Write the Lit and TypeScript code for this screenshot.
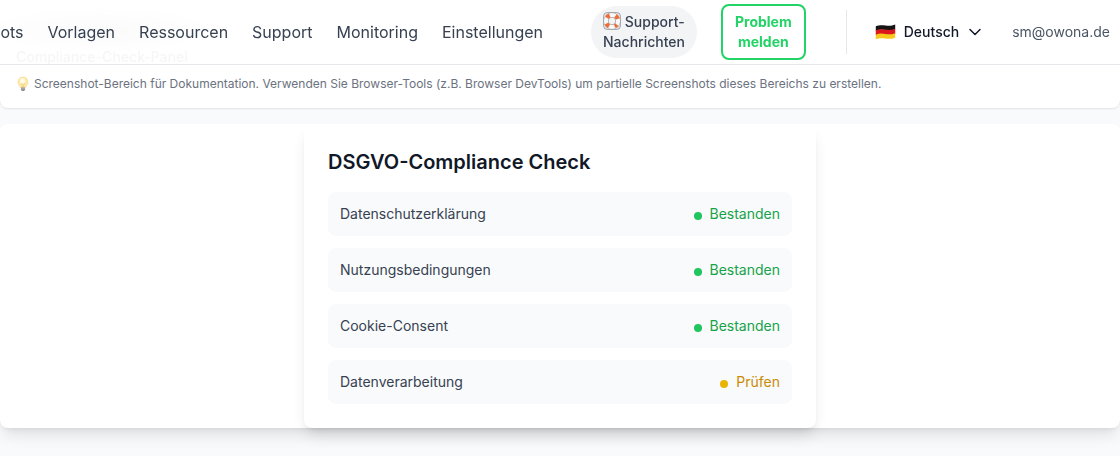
import { LitElement, html, css, svg } from "lit";
import { customElement } from "lit/decorators.js";
import { classMap } from "lit/directives/class-map.js";

const lifebuoy = svg`
  <rect x="0.6" y="0.6" width="16.8" height="16.8" rx="3.5" fill="#e6e8ea" stroke="#989ca2" stroke-width="0.9"/>
  <circle cx="9" cy="9" r="6" fill="none" stroke="#9a9ea4" stroke-width="5"/>
  <circle cx="9" cy="9" r="6" fill="none" stroke="#f8f8f8" stroke-width="4.2"/>
  <circle cx="9" cy="9" r="6" fill="none" stroke="#ee6c38" stroke-width="4.4"
    stroke-dasharray="3.8 5.625" stroke-dashoffset="1.9" transform="rotate(45 9 9)"/>
  <circle cx="9" cy="9" r="3.7" fill="#f3f4f6" stroke="#a09490" stroke-width="0.6"/>`;

const bulb = svg`
  <path d="M6 0.6C3 0.6 1 2.8 1 5.5c0 2.4 1.7 3.3 2.3 5.5h5.4c.6-2.2 2.3-3.1 2.3-5.5C11 2.8 9 .6 6 .6z"
    fill="#fdeaa8" stroke="#f2d68a" stroke-width="0.6"/>
  <ellipse cx="5.6" cy="4.6" rx="2.6" ry="2.8" fill="#fffbe6"/>
  <path d="M4.8 6.5l.6 4.2M7.2 6.5l-.6 4.2" stroke="#e3b95c" stroke-width="0.5"/>
  <path d="M3.9 11h4.2v2.2L7 14.6H5l-1.1-1.4z" fill="#8f8f8d"/>
  <path d="M3.9 12.2h4.2" stroke="#d2d2d0" stroke-width="0.5"/>`;

const flag = svg`
  <path d="M.6 2.2C4 .8 7 1 10 1.5s6 .5 9.4-.9V5C16 6.500 13 6.400 10 6S4 5.300.6 6.700z" fill="#151515"/>
  <path d="M.6 6C4 4.600 7 4.900 10 5.400s6 .5 9.400-.8v5C16 11 13 10.900 10 10.400S4 9.700.6 11z" fill="#d9171c"/>
  <path d="M.6 10.300C4 8.900 7 9.200 10 9.700s6 .5 9.400-.8v4.300c-3.400 1.400-6.400 1.300-9.400.9S4 13.400.6 14.800z" fill="#f8c81c"/>`;

@customElement("app-header")
class AppHeader extends LitElement {
  static styles = css`
    :host {
      position: fixed;
      inset: 0 0 auto 0;
      z-index: 10;
      display: flex;
      align-items: center;
      height: 64px;
      padding-right: 10px;
      background: radial-gradient(ellipse 120px 24px at 100px 30px, rgb(0 0 0 / 0.02), transparent),
        rgb(255 255 255 / 0.96);
      border-bottom: 1px solid #e5e7eb;
      white-space: nowrap;
    }
    nav {
      flex: 1;
      min-width: 0;
      overflow: hidden;
      display: flex;
      justify-content: flex-end;
      gap: 24px;
      margin-right: 48px;
      font-size: 16px;
      line-height: 24px;
    }
    a {
      flex: none;
      color: #374151;
      text-decoration: none;
    }
    button {
      font: inherit;
      cursor: pointer;
    }
    .messages {
      border-radius: 26px;
      padding: 6px 12px;
      background: #f3f4f6;
      font-size: 14px;
      line-height: 20px;
      font-weight: 500;
    }
    .messages svg {
      width: 18px;
      height: 18px;
      vertical-align: -3px;
    }
    .report {
      margin-left: 24px;
      padding: 6px 12px;
      border: 2px solid #22d366;
      border-radius: 8px;
      background: #fff;
      color: #22d366;
      font-size: 14px;
      line-height: 20px;
      font-weight: 700;
    }
    .divider {
      margin-left: 40px;
      width: 1px;
      height: 44px;
      background: #e5e7eb;
    }
    .language {
      display: flex;
      align-items: center;
      margin-left: 28px;
      padding: 0;
      border: 0;
      background: none;
      color: #111827;
      font-size: 14px;
      line-height: 20px;
      font-weight: 500;
      gap: 8px;
    }
    .mail {
      margin-left: 29px;
      color: #4b5563;
      font-size: 14px;
      line-height: 20px;
    }
  `;

  private links = ["Screenshots", "Vorlagen", "Ressourcen", "Support", "Monitoring", "Einstellungen"];

  render() {
    return html`
      <nav>${this.links.map((name) => html`<a href="#">${name}</a>`)}</nav>
      <a class="messages" href="#">
        <svg viewBox="0 0 18 18" aria-hidden="true">${lifebuoy}</svg> Support-<br />Nachrichten
      </a>
      <button class="report">Problem<br />melden</button>
      <span class="divider"></span>
      <button class="language">
        <svg width="21" height="16" viewBox="0 0 20 15.500" aria-hidden="true">${flag}</svg>
        Deutsch
        <svg width="16" height="16" viewBox="0 0 16 16" fill="none" stroke="#111827"
          stroke-width="1.500" stroke-linecap="round" stroke-linejoin="round" aria-hidden="true">
          <path d="M3 5.500l5 5 5-5" />
        </svg>
      </button>
      <span class="mail">sm@owona.de</span>
    `;
  }
}

@customElement("compliance-card")
class ComplianceCard extends LitElement {
  static styles = css`
    :host {
      display: block;
      box-sizing: border-box;
      width: 100%;
      max-width: 512px;
      margin: 0 auto;
      padding: 24px;
      background: #fff;
      border-radius: 8px;
      box-shadow: 0 10px 15px -3px rgb(0 0 0 / 0.1), 0 4px 6px -4px rgb(0 0 0 / 0.1);
    }
    h2 {
      margin: 0 0 16px;
      font-size: 20px;
      line-height: 28px;
      font-weight: 600;
      color: #111827;
    }
    ul {
      list-style: none;
      margin: 0;
      padding: 0;
      display: grid;
      gap: 12px;
    }
    li {
      display: flex;
      align-items: center;
      justify-content: space-between;
      padding: 12px;
      border-radius: 8px;
      background: #f9fafb;
      color: #374151;
      font-size: 14px;
      line-height: 20px;
    }
    .status {
      color: #16a34a;
    }
    .dot {
      display: inline-block;
      width: 8px;
      height: 8px;
      margin-right: 8px;
      border-radius: 50%;
      background: #22c55e;
      vertical-align: -1px;
    }
    .warn {
      color: #ca8a04;
    }
    .warn .dot {
      background: #eab308;
    }
  `;

  private checks = [
    { name: "Datenschutzerklärung", passed: true },
    { name: "Nutzungsbedingungen", passed: true },
    { name: "Cookie-Consent", passed: true },
    { name: "Datenverarbeitung", passed: false },
  ];

  render() {
    return html`
      <h2>DSGVO-Compliance Check</h2>
      <ul>
        ${this.checks.map(
          (c) => html`<li>
            <span>${c.name}</span>
            <span class=${classMap({ status: true, warn: !c.passed })}
              ><span class="dot"></span>${c.passed ? "Bestanden" : "Prüfen"}</span>
          </li>`
        )}
      </ul>
    `;
  }
}

@customElement("app-root")
class AppRoot extends LitElement {
  static styles = css`
    :host {
      display: block;
      box-sizing: border-box;
      min-height: 100vh;
      background: #f9fafb;
      font-family: Inter, "Liberation Sans", sans-serif;
    }
    .intro {
      padding: 48px 16px 16px;
      background: #fff;
      border-radius: 0 0 8px 8px;
      box-shadow: 0 1px 2px rgb(0 0 0 / 0.1);
    }
    h1 {
      margin: 0 0 10px;
      font-size: 14px;
      line-height: 18px;
      font-weight: 500;
      color: #111827;
    }
    p {
      display: flex;
      align-items: center;
      gap: 4px;
      margin: 0;
      color: #6b7280;
      font-size: 12px;
      line-height: 16px;
    }
    .bulb {
      flex: none;
      width: 14px;
      height: 16px;
    }
    .preview {
      margin-top: 16px;
      background: #fff;
      border-radius: 8px;
      box-shadow: 0 10px 15px -3px rgb(0 0 0 / 0.1), 0 4px 6px -4px rgb(0 0 0 / 0.1);
    }
  `;

  render() {
    return html`
      <app-header></app-header>
      <main>
        <section class="intro">
          <h1>Compliance-Check-Panel</h1>
          <p>
            <svg class="bulb" viewBox="-1 -0.5 14 16" aria-hidden="true">${bulb}</svg>
            Screenshot-Bereich für Dokumentation. Verwenden Sie Browser-Tools (z.B. Browser DevTools) um partielle Screenshots dieses Bereichs zu erstellen.
          </p>
        </section>
        <section class="preview">
          <compliance-card></compliance-card>
        </section>
      </main>
    `;
  }
}
